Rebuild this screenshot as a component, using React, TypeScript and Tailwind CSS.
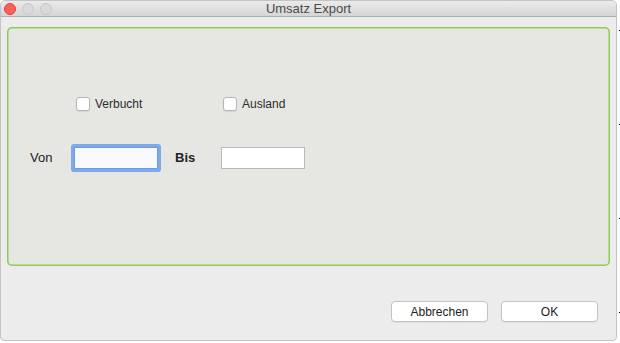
import React, { useState } from "react";

const font = { fontFamily: '"Liberation Sans", Arial, sans-serif' };

const Checkbox: React.FC<{ label: string; checked: boolean; onChange: () => void }> = ({ label, checked, onChange }) => (
  <label className="flex items-center gap-[5px] cursor-default">
    <span
      onClick={onChange}
      className="w-[14px] h-[14px] rounded-[3px] border border-[#b5b5b5] bg-white shadow-[0_1px_1px_rgba(0,0,0,0.08)] flex items-center justify-center"
    >
      {checked && (
        <svg width="10" height="10" viewBox="0 0 10 10">
          <path d="M2 5.2 L4.2 7.4 L8 2.6" stroke="#333" strokeWidth="1.6" fill="none" />
        </svg>
      )}
    </span>
    <span className="text-[12px] text-[#2b2b2b]">{label}</span>
  </label>
);

export default function App() {
  const [verbucht, setVerbucht] = useState(false);
  const [ausland, setAusland] = useState(false);
  const [von, setVon] = useState("");
  const [bis, setBis] = useState("");

  return (
    <div className="w-[620px] h-[343px] bg-white flex" style={font}>
      <div className="w-[617px] h-[341px] flex flex-col bg-[#ececec] border border-[#c4c4c4] rounded-t-[5px] rounded-b-[4px] overflow-hidden">
        {/* title bar */}
        <div className="relative h-[16px] flex items-center justify-center bg-gradient-to-b from-[#ebebeb] to-[#d5d5d5] border-b border-[#b1b1b1]">
          <div className="absolute left-[3px] top-[2px] flex gap-[6px]">
            <span className="w-[12px] h-[12px] rounded-full bg-[#fc5f57] border border-[#e0443e]" />
            <span className="w-[12px] h-[12px] rounded-full bg-[#d9d9d9] border border-[#c6c6c6]" />
            <span className="w-[12px] h-[12px] rounded-full bg-[#d9d9d9] border border-[#c6c6c6]" />
          </div>
          <span className="text-[13px] text-[#4a4a4a] leading-none">Umsatz Export</span>
        </div>

        {/* content */}
        <div className="flex-1 flex flex-col px-[6px] pt-[10px]">
          <div className="h-[239px] rounded-[5px] ring-[1.5px] ring-inset ring-[#8ecb55] bg-[#e6e7e2] flex flex-col">
            <div className="flex pl-[69px] pt-[68px]">
              <div className="w-[147px]">
                <Checkbox label="Verbucht" checked={verbucht} onChange={() => setVerbucht(!verbucht)} />
              </div>
              <Checkbox label="Ausland" checked={ausland} onChange={() => setAusland(!ausland)} />
            </div>
            <div className="flex items-center pl-[23px] mt-[34px]">
              <span className="text-[13px] text-[#222] w-[44px]">Von</span>
              <input
                value={von}
                onChange={(e) => setVon(e.target.value)}
                className="w-[84px] h-[22px] bg-[#f7f9fe] border border-[#6e9be0] outline-none ring-[3px] ring-[#7ea9ea] rounded-[1px] px-1 text-[12px]"
              />
              <span className="text-[13px] font-bold text-[#222] ml-[17px] w-[46px]">Bis</span>
              <input
                value={bis}
                onChange={(e) => setBis(e.target.value)}
                className="w-[84px] h-[22px] bg-white border border-[#b9b9b9] outline-none px-1 text-[12px]"
              />
            </div>
          </div>

          <div className="flex justify-end gap-[13px] mt-[35px] pr-[12px]">
            <button className="w-[97px] h-[21px] bg-white border border-[#c3c3c3] rounded-[4px] text-[12px] text-[#222] shadow-[0_1px_1px_rgba(0,0,0,0.06)]">
              Abbrechen
            </button>
            <button className="w-[97px] h-[21px] bg-white border border-[#c3c3c3] rounded-[4px] text-[12px] text-[#222] shadow-[0_1px_1px_rgba(0,0,0,0.06)]">
              OK
            </button>
          </div>
        </div>
      </div>
      <div className="flex-1 flex flex-col justify-between items-end py-[30px]">
        <span className="w-[1px] h-[1px] bg-black" />
        <span className="w-[1px] h-[1px] bg-black" />
        <span className="w-[1px] h-[1px] bg-black" />
        <span className="w-[1px] h-[1px] bg-black" />
      </div>
    </div>
  );
}
